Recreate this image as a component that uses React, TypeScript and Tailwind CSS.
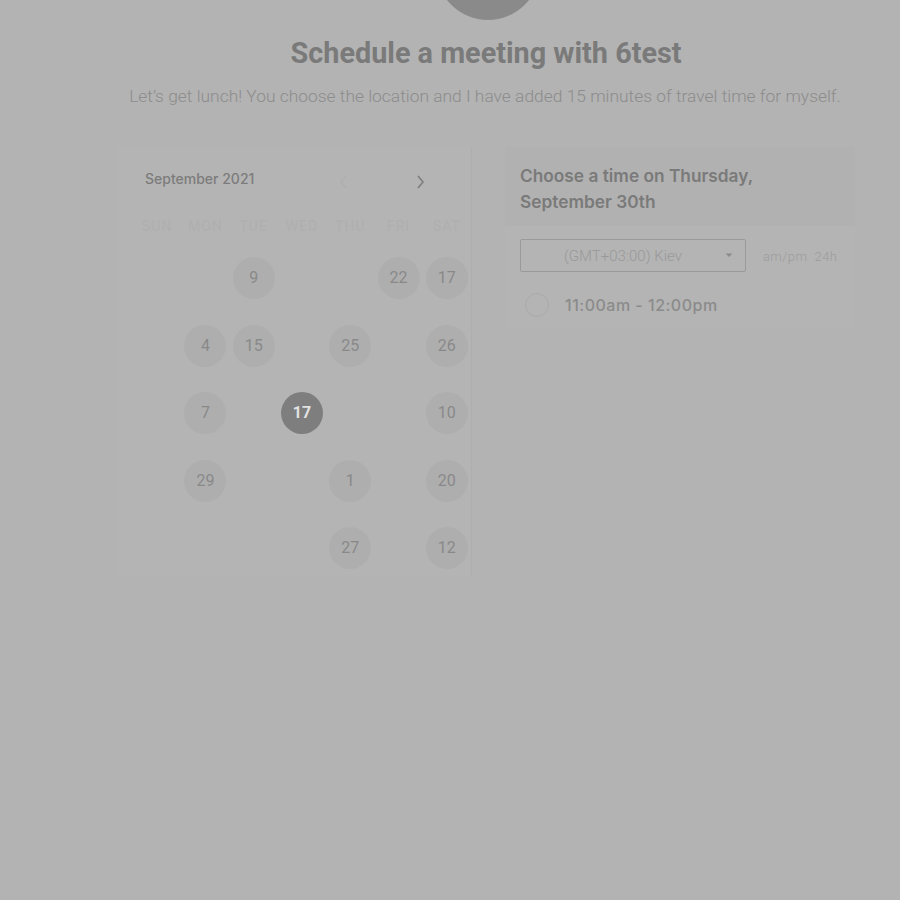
const weekdays = ["SUN", "MON", "TUE", "WED", "THU", "FRI", "SAT"];

// sparse grid: only some days show as slots
const rows: (number | null)[][] = [
  [null, null, 9, null, null, 22, 17],
  [null, 4, 15, null, 25, null, 26],
  [null, 7, null, 17, null, null, 10],
  [null, 29, null, null, 1, null, 20],
  [null, null, null, null, 27, null, 12],
];

const selected = { row: 2, col: 3 };

const App = () => {
  return (
    <div
      className="w-[900px] h-[900px] overflow-hidden bg-[#b3b3b3] relative"
      style={{ fontFamily: "Inter, 'Noto Sans', sans-serif" }}
    >
      <div className="flex flex-col items-center">
        <div className="w-[104px] h-[104px] rounded-full bg-[#8a8a8a] -mt-[84px] ml-[76px]"></div>
        <h1
          className="mt-[16px] ml-[72px] text-[28.8px] font-bold text-[#7a7a7a] leading-[34px]"
          style={{ fontFamily: "Roboto, sans-serif" }}
        >
          Schedule a meeting with 6test
        </h1>
        <p
          className="mt-[14px] ml-[70px] text-[17.4px] font-light text-[#8c8c8c] whitespace-nowrap leading-[24px]"
          style={{ fontFamily: "Roboto, sans-serif" }}
        >
          Let’s get lunch! You choose the location and I have added 15 minutes of travel time for myself.
        </p>
      </div>

      <div className="flex gap-[35px] pl-[117px] mt-[39px]">
        {/* calendar */}
        <div className="w-[355px] h-[430px] bg-[#b4b4b4] border-r border-[#aeaeae] rounded-[2px] pt-[20px]">
          <div className="flex items-center pl-[28px] pr-[46px]">
            <span className="text-[14px] font-medium text-[#7c7c7c]">September 2021</span>
            <span className="ml-auto flex items-center gap-[68px]">
              <svg width="9" height="14" viewBox="0 0 9 14" className="mt-[8px]">
                <path d="M7 1 L2 7 L7 13" fill="none" stroke="#afafaf" strokeWidth="1.5" />
              </svg>
              <svg width="9" height="14" viewBox="0 0 9 14" className="mt-[8px]">
                <path d="M2 1 L7 7 L2 13" fill="none" stroke="#7d7d7d" strokeWidth="1.6" />
              </svg>
            </span>
          </div>
          <div className="grid grid-cols-7 pl-[16px] mt-[27px]" style={{ fontFamily: "Roboto, sans-serif" }}>
            {weekdays.map((d) => (
              <span key={d} className="text-center text-[14px] tracking-[1px] text-[#afafaf]">
                {d}
              </span>
            ))}
          </div>
          <div className="flex flex-col pl-[16px] mt-[20px] gap-[25.5px]" style={{ fontFamily: "Roboto, sans-serif" }}>
            {rows.map((row, r) => (
              <div key={r} className="grid grid-cols-7">
                {row.map((day, c) => (
                  <div key={c} className="flex justify-center">
                    {day === null ? (
                      <div className="w-[42px] h-[42px]"></div>
                    ) : r === selected.row && c === selected.col ? (
                      <div className="w-[42px] h-[42px] rounded-full bg-[#7e7e7e] flex items-center justify-center text-[16px] font-bold text-[#e2e2e2]">
                        {day}
                      </div>
                    ) : (
                      <div className="w-[42px] h-[42px] rounded-full bg-[#aeaeae] flex items-center justify-center text-[16px] text-[#898989]">
                        {day}
                      </div>
                    )}
                  </div>
                ))}
              </div>
            ))}
          </div>
        </div>

        {/* time picker */}
        <div className="w-[350px] h-[182px] bg-[#b4b4b4] rounded-[2px] -ml-[2px]">
          <div className="px-[15px] pt-[16px] pb-[10px] border-b border-[#b0b0b0] bg-[#b1b1b1]">
            <h2 className="text-[17.3px] font-semibold leading-[26px] text-[#7a7a7a]">
              Choose a time on Thursday,
              <br />
              September 30th
            </h2>
          </div>
          <div className="flex items-center px-[15px] mt-[13px]">
            <div
              className="w-[226px] h-[33px] border border-[#9a9a9a] rounded-[2px] flex items-center pl-[43px] pr-[12px]"
              style={{ fontFamily: "Roboto, sans-serif" }}
            >
              <span className="text-[15px] font-light text-[#999999] mt-[1px]">(GMT+03:00) Kiev</span>
              <svg width="8" height="5" viewBox="0 0 8 5" className="ml-auto">
                <path d="M0.5 0.5 L4 4 L7.5 0.5 Z" fill="#8c8c8c" />
              </svg>
            </div>
            <span
              className="ml-[17px] mt-[2px] text-[13px] font-light text-[#9c9c9c] tracking-[0.4px]"
              style={{ fontFamily: "Roboto, sans-serif" }}
            >
              am/pm&nbsp;&nbsp;24h
            </span>
          </div>
          <div className="flex items-center px-[20px] mt-[21px]">
            <div className="w-[24px] h-[24px] rounded-full border border-[#a9a9a9]"></div>
            <span className="ml-[16px] text-[16px] font-medium text-[#8b8b8b] tracking-[0.5px]">
              11:00am - 12:00pm
            </span>
          </div>
        </div>
      </div>
    </div>
  );
};

export default App;
